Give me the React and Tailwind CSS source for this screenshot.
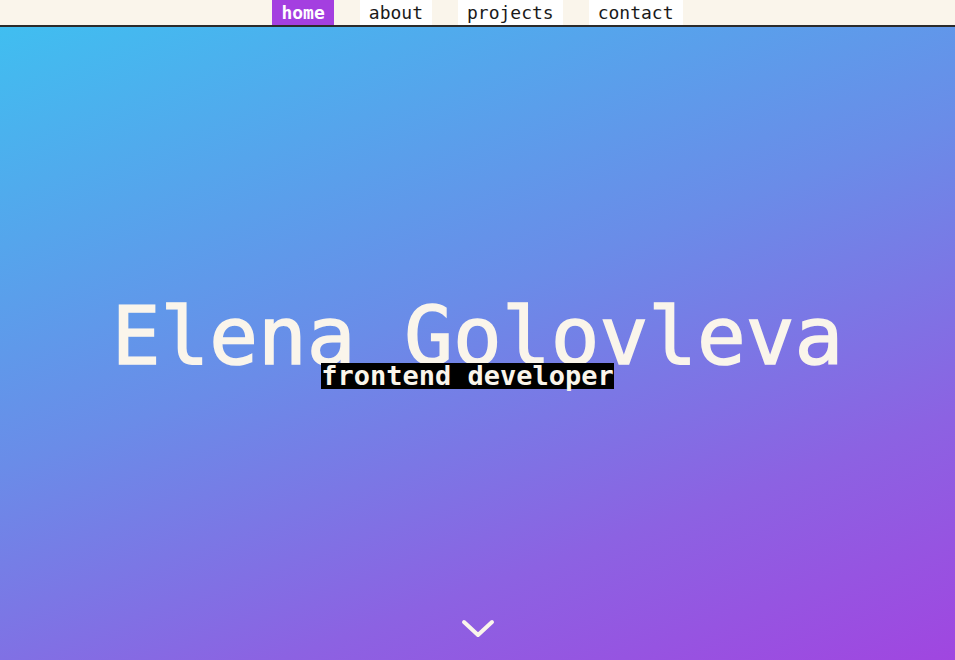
export default function App() {
  const mono = { fontFamily: '"DejaVu Sans Mono", "Liberation Mono", monospace' };
  return (
    <div className="w-[955px] h-[660px] overflow-hidden flex flex-col" style={mono}>
      <header className="h-[27px] bg-[#faf5eb] border-b-2 border-[#2b2b2b] flex justify-center items-stretch gap-[26px] shrink-0">
        <a className="bg-[#a43fe0] text-white font-bold text-[18px] px-[9px] flex items-center leading-none h-[25px]">home</a>
        <a className="bg-white text-[#1a1a1a] text-[18px] px-[9px] flex items-center leading-none h-[25px]">about</a>
        <a className="bg-white text-[#1a1a1a] text-[18px] px-[9px] flex items-center leading-none h-[25px]">projects</a>
        <a className="bg-white text-[#1a1a1a] text-[18px] px-[9px] flex items-center leading-none h-[25px]">contact</a>
      </header>
      <main className="flex-1 relative bg-[linear-gradient(160deg,#40bef0_0%,#6a8ce8_45%,#8c62e2_75%,#a046e0_100%)] flex flex-col items-center justify-center">
        <h1 className="text-[81px] leading-none text-[#faf5eb] font-normal tracking-normal mt-[-2px] [-webkit-text-stroke:1.5px_#faf5eb]">Elena Golovleva</h1>
        <p className="bg-black text-[#faf5eb] font-bold text-[27px] leading-[26px] mt-[-14px] mr-[20px] relative">frontend developer</p>
        <svg className="absolute bottom-[20px] left-1/2 -translate-x-1/2" width="34" height="22" viewBox="0 0 34 22">
          <polyline points="3,4 17,17 31,4" fill="none" stroke="#faf5eb" strokeWidth="4" strokeLinecap="round" strokeLinejoin="round" />
        </svg>
      </main>
    </div>
  );
}
